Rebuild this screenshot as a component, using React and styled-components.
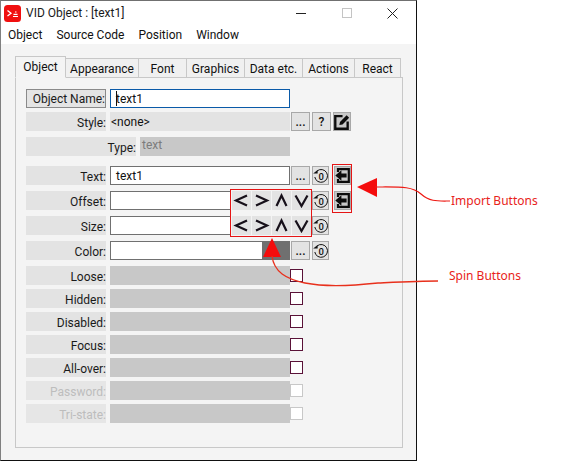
import React from "react";
import styled, { createGlobalStyle } from "styled-components";

const GlobalStyle = createGlobalStyle`
  html, body {
    margin: 0;
    background: #fff;
  }
  body {
    font-family: Roboto, "Noto Sans", sans-serif;
    font-size: 12px;
    color: #111;
  }
`;

const Page = styled.div`
  position: relative;
  width: 563px;
  height: 462px;
  overflow: hidden;
  background: #fff;
`;

const Window = styled.div`
  box-sizing: border-box;
  width: 417px;
  height: 461px;
  display: flex;
  flex-direction: column;
  background: #f4f4f4;
  border-top: 1px solid #707070;
  border-left: 1px solid #808080;
  border-right: 1px solid #111;
  border-bottom: 1px solid #111;
`;

const TitleBar = styled.div`
  height: 24px;
  display: flex;
  align-items: center;
  background: #fff;
  padding-left: 3px;
  gap: 5px;
`;

const TitleText = styled.span`
  flex: 1;
  color: #1a1a1a;
`;

const WinButtons = styled.div`
  display: flex;
  align-items: center;
  padding-right: 18px;
  gap: 35px;
`;

const MenuBar = styled.div`
  height: 19px;
  display: flex;
  align-items: flex-start;
  gap: 14px;
  padding-left: 7px;
  background: #fff;
  line-height: 20px;
`;

const Body = styled.div`
  flex: 1;
  padding: 12px 13px 12px 14px;
  display: flex;
  flex-direction: column;
`;

const TabStrip = styled.div`
  display: flex;
  align-items: flex-end;
  height: 22px;
  position: relative;
  z-index: 1;
  margin-bottom: -1px;
`;

const Tab = styled.div`
  box-sizing: border-box;
  width: ${({ $w }) => $w}px;
  height: ${({ $active }) => ($active ? 22 : 20)}px;
  display: flex;
  align-items: center;
  justify-content: center;
  padding-top: ${({ $active }) => ($active ? 0 : 2)}px;
  background: ${({ $active }) => ($active ? "#f4f4f4" : "#f0f0f0")};
  border: 1px solid #c8c8c8;
  border-left: ${({ $active, $first }) => ($active || $first ? "1px solid #c8c8c8" : "none")};
  border-bottom: ${({ $active }) => ($active ? "1px solid #f4f4f4" : "1px solid #c8c8c8")};
`;

const Panel = styled.div`
  box-sizing: border-box;
  width: 388px;
  flex: 1;
  border: 1px solid #c8c8c8;
  padding: 11px 10px 10px;
  display: flex;
  flex-direction: column;
`;

const Row = styled.div`
  height: 19px;
  display: flex;
  align-items: stretch;
  margin-top: ${({ $top }) => $top || 0}px;
`;

const Label = styled.div`
  box-sizing: border-box;
  width: ${({ $w }) => $w || 80}px;
  margin-right: 4px;
  display: flex;
  align-items: center;
  justify-content: flex-end;
  background: ${({ $off }) => ($off ? "#e6e6e6" : "#e3e3e3")};
  color: ${({ $off }) => ($off ? "#bdbdbd" : "#1a1a1a")};
  white-space: nowrap;
  overflow: hidden;
  padding-top: 2px;
`;

const NameButton = styled(Label)`
  border: 1px solid #8a8a8a;
  background: #e4e4e4;
  padding-top: 1px;
`;

const Input = styled.div`
  box-sizing: border-box;
  width: ${({ $w }) => $w || 180}px;
  display: flex;
  align-items: center;
  background: #fff;
  border: 1px solid ${({ $focus }) => ($focus ? "#0a5aa8" : "#707070")};
  padding-left: 5px;
`;

const Caret = styled.span`
  border-left: 1px solid #111;
  margin-right: -1px;
  height: 15px;
`;

const Swatch = styled.div`
  width: 27px;
  background: #707070;
`;

const Plain = styled.div`
  width: 180px;
  display: flex;
  align-items: center;
  background: #e3e3e3;
  padding-left: 1px;
  box-sizing: border-box;
`;

const Greyed = styled.div`
  box-sizing: border-box;
  width: ${({ $w }) => $w || 180}px;
  background: #c8c8c8;
  color: #7c7c7c;
  padding-left: 2px;
  line-height: 16px;
`;

const Check = styled.div`
  box-sizing: border-box;
  width: 13px;
  height: 13px;
  align-self: center;
  background: #fff;
  border: 1px solid ${({ $off }) => ($off ? "#c8c8c8" : "#5a1238")};
`;

const Btn = styled.div`
  box-sizing: border-box;
  width: ${({ $w }) => $w || 19}px;
  height: 19px;
  margin-left: ${({ $left }) => $left || 2}px;
  display: flex;
  align-items: center;
  justify-content: center;
  background: ${({ $dark }) => ($dark ? "#c8c8c8" : "#e3e3e3")};
  border: 1px solid #a8a8a8;
  font-weight: 500;
  line-height: 1;

  svg {
    flex: none;
  }
`;

const SpinBox = styled.div`
  position: absolute;
  left: 230px;
  top: 189px;
  box-sizing: border-box;
  width: 82px;
  height: 48px;
  padding: 1px 0 0 1px;
  display: grid;
  grid-template-columns: repeat(4, 19px);
  grid-auto-rows: 19px;
  column-gap: 1px;
  row-gap: 6px;
  background: #f4f4f4;
  border: 1px solid #e51515;
`;

const SpinBtn = styled.div`
  display: flex;
  align-items: center;
  justify-content: center;
  background: #e3e3e3;
`;

const ImportFrame = styled.div`
  position: absolute;
  left: 332px;
  top: 164px;
  box-sizing: border-box;
  width: 20px;
  height: 49px;
  border: 1px solid #e51515;
`;

const Annotations = styled.svg`
  position: absolute;
  left: 0;
  top: 0;
  pointer-events: none;
`;

const Note = styled.div`
  position: absolute;
  left: ${({ $x }) => $x}px;
  top: ${({ $y }) => $y}px;
  color: #e8231a;
  font-family: "Noto Sans", sans-serif;
  font-size: 12px;
  line-height: 16px;
`;

const Logo = () => (
  <svg width="17" height="17" viewBox="0 0 17 17">
    <rect width="17" height="17" rx="3.5" fill="#f00f0f" />
    <path d="M3.5 5.5 7 8.3 3.5 11" stroke="#fff" strokeWidth="1.3" fill="none" />
    <path d="M9 11.5H14M9.5 9.3H13.5M11 7H12.5" stroke="#fff" strokeWidth="1.2" fill="none" />
  </svg>
);

const ResetIcon = () => (
  <svg width="16" height="16" viewBox="0 0 16 16">
    <path d="M4 3A6.4 6.4 0 1 1 1.8 9" stroke="#111" strokeWidth="1" fill="none" />
    <path d="M0.2 5.6H4.6V2Z" fill="#111" />
    <text x="5.6" y="11.6" fontSize="9.5" fontWeight="500" fontFamily="Roboto" fill="#111">0</text>
  </svg>
);

const ImportIcon = () => (
  <svg width="15" height="15" viewBox="0 0 15 15">
    <path d="M3 4V1.2H13.8V13.8H3V11" stroke="#0c0c0c" strokeWidth="2.2" fill="none" />
    <path d="M0.3 7.5 6.4 2.2V5.4H11.6V9.6H6.4V12.8Z" fill="#0c0c0c" />
  </svg>
);

const EditIcon = () => (
  <svg width="16" height="16" viewBox="0 0 15 15">
    <path d="M8 2H1.2V13.8H12.8V7" stroke="#0c0c0c" strokeWidth="2.2" fill="none" />
    <path d="M5 10.4 5.6 7.4 11.8 1.2 14.2 3.6 8 9.8Z" fill="#0c0c0c" />
  </svg>
);

const chevrons = {
  left: "M14 2.5 3 7.5 14 12.5",
  right: "M3 2.5 14 7.5 3 12.5",
  up: "M3.5 13 8.5 2.5 13.5 13",
  down: "M2.5 2.5 8.5 13 14.5 2.5",
};

const Chevron = ({ dir }) => (
  <svg width="17" height="15" viewBox="0 0 17 15">
    <path d={chevrons[dir]} stroke="#17101a" strokeWidth="2.2" fill="none" />
  </svg>
);

const tabs = [
  ["Object", 51],
  ["Appearance", 73],
  ["Font", 48],
  ["Graphics", 58],
  ["Data etc.", 58],
  ["Actions", 52],
  ["React", 46],
];

const flags = [
  ["Loose:", false],
  ["Hidden:", false],
  ["Disabled:", false],
  ["Focus:", false],
  ["All-over:", false],
  ["Password:", true],
  ["Tri-state:", true],
];

const spinDirs = ["left", "right", "up", "down", "left", "right", "up", "down"];

export default function App() {
  return (
    <Page>
      <GlobalStyle />
      <Window>
        <TitleBar>
          <Logo />
          <TitleText>VID Object : [text1]</TitleText>
          <WinButtons>
            <svg width="11" height="11" viewBox="0 0 11 11">
              <path d="M0 5.5H10" stroke="#222" strokeWidth="1" />
            </svg>
            <svg width="10" height="10" viewBox="0 0 10 10">
              <rect x="0.5" y="0.5" width="9" height="9" fill="none" stroke="#c4c4c4" />
            </svg>
            <svg width="11" height="11" viewBox="0 0 11 11">
              <path d="M0.5 0.5 10.5 10.5M10.5 0.5 0.5 10.5" stroke="#222" strokeWidth="1" />
            </svg>
          </WinButtons>
        </TitleBar>
        <MenuBar>
          <span>Object</span>
          <span>Source Code</span>
          <span>Position</span>
          <span>Window</span>
        </MenuBar>
        <Body>
          <TabStrip>
            {tabs.map(([name, w], i) => (
              <Tab key={name} $w={w} $active={i === 0} $first={i === 0}>
                {name}
              </Tab>
            ))}
          </TabStrip>
          <Panel>
            <Row>
              <NameButton>Object Name:</NameButton>
              <Input $focus>
                <Caret />
                text1
              </Input>
            </Row>
            <Row $top={4}>
              <Label>Style:</Label>
              <Plain>&lt;none&gt;</Plain>
              <Btn $left={1}>...</Btn>
              <Btn>?</Btn>
              <Btn $w={18} $dark>
                <EditIcon />
              </Btn>
            </Row>
            <Row $top={6}>
              <Label $w={110}>Type:</Label>
              <Greyed $w={150}>text</Greyed>
            </Row>
            <Row $top={10}>
              <Label>Text:</Label>
              <Input>text1</Input>
              <Btn $left={1}>...</Btn>
              <Btn $w={17}>
                <ResetIcon />
              </Btn>
              <Btn $left={5} $w={17} $dark>
                <ImportIcon />
              </Btn>
            </Row>
            <Row $top={6}>
              <Label>Offset:</Label>
              <Input />
              <Btn $left={1}>...</Btn>
              <Btn $w={17}>
                <ResetIcon />
              </Btn>
              <Btn $left={5} $w={17} $dark>
                <ImportIcon />
              </Btn>
            </Row>
            <Row $top={6}>
              <Label>Size:</Label>
              <Input />
              <Btn $left={1}>...</Btn>
              <Btn $w={17}>
                <ResetIcon />
              </Btn>
            </Row>
            <Row $top={6}>
              <Label>Color:</Label>
              <Input $w={153} />
              <Swatch />
              <Btn $left={1}>...</Btn>
              <Btn $w={17}>
                <ResetIcon />
              </Btn>
            </Row>
            {flags.map(([name, off], i) => (
              <Row key={name} $top={i === 0 ? 6 : 4}>
                <Label $off={off}>{name}</Label>
                <Greyed />
                <Check $off={off} />
              </Row>
            ))}
          </Panel>
        </Body>
      </Window>

      <SpinBox>
        {spinDirs.map((dir, i) => (
          <SpinBtn key={i}>
            <Chevron dir={dir} />
          </SpinBtn>
        ))}
      </SpinBox>
      <ImportFrame />

      <Annotations width="563" height="462" viewBox="0 0 563 462">
        <path d="M357 187 377 178V197Z" fill="#f40c0c" />
        <path d="M375 187C400 187 412 186 421 194C430 202 438 201 450 201" stroke="#ee1a14" strokeWidth="1.2" fill="none" />
        <path d="M272 238 263 257H281Z" fill="#f40c0c" />
        <path d="M272 256C274 272 286 279 305 283C325 287 350 286 378 283C400 282 420 281 438 281" stroke="#e8301c" strokeWidth="1.3" fill="none" />
      </Annotations>
      <Note $x={451} $y={193}>Import Buttons</Note>
      <Note $x={449} $y={268}>Spin Buttons</Note>
    </Page>
  );
}
